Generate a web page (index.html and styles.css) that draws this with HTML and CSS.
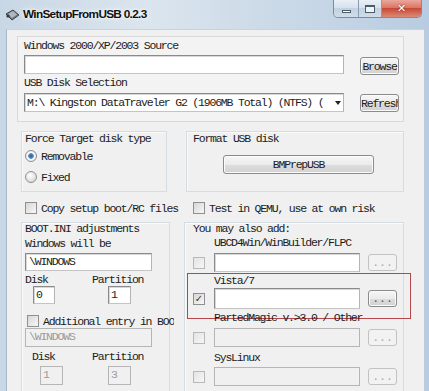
FILE: index.html
```html
<!DOCTYPE html>
<html lang="en">

<head>
    <meta charset="UTF-8">
    <title>WinSetupFromUSB 0.2.3</title>
    <link rel="stylesheet" href="styles.css">
</head>

<body>
<div class="window">
    <div class="titlebar">
        <svg class="app-icon" width="15" height="12" viewBox="0 0 15 12">
            <path d="M1 5 L8 1 L14 6 L7 11 Z" fill="#6f7a85" stroke="#3d444c" stroke-width="1"/>
            <path d="M3 5 L8 2 L12 5.5 L7 9 Z" fill="#aeb8c2"/>
            <circle cx="3" cy="7" r="1.6" fill="#2f353b"/>
        </svg>
        <span class="title">WinSetupFromUSB 0.2.3</span>
        <div class="caption">
            <span class="cap min"><i></i></span>
            <span class="cap max"><i></i></span>
            <span class="cap close">&#x2715;</span>
        </div>
    </div>

    <div class="client">
        <!-- source + usb disk -->
        <div class="panel">
            <div class="lbl">Windows 2000/XP/2003 Source</div>
            <div class="row">
                <div class="textbox src"></div>
                <button class="btn">Browse</button>
            </div>
            <div class="lbl second">USB Disk Selection</div>
            <div class="row combo-row">
                <div class="textbox combo">
                    <span class="combo-text">M:\ Kingston DataTraveler G2 (1906MB Total) (NTFS) (</span>
                    <span class="arrow"></span>
                </div>
                <button class="btn">Refresh</button>
            </div>
        </div>

        <div class="pair">
            <div class="group force">
                <div class="glabel">Force Target disk type</div>
                <div class="opt first"><span class="radio on"></span>Removable</div>
                <div class="opt"><span class="radio"></span>Fixed</div>
            </div>
            <div class="group format">
                <div class="glabel">Format USB disk</div>
                <button class="btn big">BMPrepUSB</button>
            </div>
        </div>

        <div class="checks">
            <div class="opt left"><span class="check"></span>Copy setup boot/RC files</div>
            <div class="opt right"><span class="check"></span>Test in QEMU, use at own risk</div>
        </div>

        <div class="pair bottom">
            <div class="group boot">
                <div class="glabel">BOOT.INI adjustments</div>
                <div class="lbl2">Windows will be</div>
                <div class="textbox path">\WINDOWS</div>
                <div class="dp-labels"><span class="d">Disk</span><span>Partition</span></div>
                <div class="dp-boxes">
                    <div class="textbox num n1">0</div>
                    <div class="textbox num">1</div>
                </div>
                <div class="opt extra"><span class="check"></span><span class="clip">Additional entry in BOO(</span></div>
                <div class="textbox path off">\WINDOWS</div>
                <div class="dp-labels lower"><span class="d">Disk</span><span>Partition</span></div>
                <div class="dp-boxes lower">
                    <div class="textbox num n1 off">1</div>
                    <div class="textbox num off">3</div>
                </div>
            </div>

            <div class="group add">
                <div class="glabel">You may also add:</div>
                <div class="entry">
                    <div class="elabel">UBCD4Win/WinBuilder/FLPC</div>
                    <div class="erow">
                        <span class="check off"></span>
                        <div class="textbox etext"></div>
                        <button class="btn dots off">...</button>
                    </div>
                </div>
                <div class="entry vista">
                    <div class="elabel">Vista/7</div>
                    <div class="erow">
                        <span class="check on">&#x2713;</span>
                        <div class="textbox etext"></div>
                        <button class="btn dots">...</button>
                    </div>
                </div>
                <div class="entry">
                    <div class="elabel">PartedMagic v.&gt;3.0 / Other</div>
                    <div class="erow">
                        <span class="check off"></span>
                        <div class="textbox etext off"></div>
                        <button class="btn dots off">...</button>
                    </div>
                </div>
                <div class="entry">
                    <div class="elabel">SysLinux</div>
                    <div class="erow">
                        <span class="check off"></span>
                        <div class="textbox etext off"></div>
                        <button class="btn dots off">...</button>
                    </div>
                </div>
            </div>
        </div>
    </div>
</div>
</body>

</html>
```

FILE: styles.css
```css
* {
    margin: 0;
    padding: 0;
    box-sizing: border-box;
}

body {
    width: 429px;
    height: 391px;
    overflow: hidden;
    font-family: "Liberation Mono", "DejaVu Sans Mono", monospace;
    font-size: 11.5px;
    letter-spacing: -1.2px;
    color: #1c1c1c;
}

.window {
    width: 429px;
    height: 391px;
    display: flex;
    flex-direction: column;
    padding: 0 5px 0 6px;
    background: linear-gradient(90deg, #c8d7e5, #dbe5ee 35%, #cddbe8 60%, #c0d2e4 85%, #b8cbe0);
}

/* title bar */
.titlebar {
    height: 29px;
    display: flex;
    align-items: flex-start;
    flex-shrink: 0;
}

.app-icon {
    margin: 9px 0 0 -1px;
}

.title {
    margin: 7px 0 0 3px;
    font-family: "Liberation Sans", Arial, sans-serif;
    font-weight: bold;
    font-size: 11.8px;
    letter-spacing: -0.7px;
    color: #111;
    text-shadow: 0 0 6px rgba(255, 255, 255, 0.9), 0 0 3px rgba(255, 255, 255, 0.9);
}

.caption {
    margin: 0 2px 0 auto;
    display: flex;
    height: 18px;
    border: 1px solid #7b8b9c;
    border-top: 0;
    border-radius: 0 0 5px 5px;
    overflow: hidden;
}

.cap {
    height: 17px;
    display: flex;
    align-items: center;
    justify-content: center;
    background: linear-gradient(#e9eff5, #d6e1ec 50%, #c2d2e2 50%, #cfdcea);
    border-right: 1px solid #8c9cad;
}

.min {
    width: 25px;
}

.min i {
    width: 9px;
    height: 3px;
    margin-top: 5px;
    border: 1px solid #4d5a68;
    background: #fff;
}

.max {
    width: 23px;
}

.max i {
    width: 10px;
    height: 8px;
    border: 1px solid #4d5a68;
    border-top-width: 2px;
    background: #eef3f8;
}

.close {
    width: 39px;
    border-right: 0;
    color: #fff;
    font-family: "DejaVu Sans", sans-serif;
    font-size: 11px;
    font-weight: bold;
    letter-spacing: 0;
    text-shadow: 0 0 2px #7a2015;
    background: linear-gradient(#eaa89d, #d9705f 50%, #c84a36 50%, #d98a76);
}

/* window body */
.client {
    flex: 1;
    background: #f0f0f0;
    border-left: 1px solid #a8b7c6;
    border-top: 1px solid #c7d3de;
    padding: 6px 20px 0 10px;
    overflow: hidden;
}

.panel {
    width: 387px;
    height: 86px;
    border: 1px solid #d9d9d9;
    background: #f3f3f3;
    padding: 2px 0 0 6px;
}

.lbl {
    line-height: 13px;
}

.lbl.second {
    margin-top: 1px;
}

.row {
    display: flex;
    align-items: flex-start;
    gap: 16px;
    margin-top: 3px;
}

.combo-row {
    margin-top: 4px;
}

.textbox {
    background: #fff;
    border: 1px solid #8a8a8a;
    border-right-color: #b4b4b4;
    border-bottom-color: #c4c4c4;
    box-shadow: inset 1px 1px 0 #d8d8d8;
    height: 19px;
    line-height: 17px;
    padding-left: 2px;
    white-space: nowrap;
    overflow: hidden;
}

.textbox.src,
.textbox.combo {
    width: 320px;
}

.combo {
    display: flex;
    align-items: center;
}

.combo-text {
    width: 305px;
    overflow: hidden;
    white-space: nowrap;
}

.arrow {
    margin-left: 3px;
    border-left: 3.5px solid transparent;
    border-right: 3.5px solid transparent;
    border-top: 4px solid #222;
}

.btn {
    font-family: inherit;
    font-size: 11.5px;
    letter-spacing: -1.2px;
    color: #1c1c1c;
    height: 18px;
    width: 39px;
    margin-top: 2px;
    border: 1px solid #8b8b8b;
    border-radius: 3px;
    background: linear-gradient(#f6f6f6, #ebebeb 50%, #dddddd 50%, #d2d2d2);
    box-shadow: inset 0 0 0 1px #fbfbfb;
    white-space: nowrap;
    overflow: hidden;
    text-align: center;
}

.combo-row .btn {
    margin-top: 1px;
}

/* group boxes */
.pair {
    display: flex;
    margin-top: 9px;
    margin-left: 4px;
    gap: 19px;
}

.group {
    border: 1px solid #d5dce2;
    box-shadow: inset 1px 1px 0 #fafafa;
    height: 61px;
}

.force {
    width: 146px;
    padding-left: 3px;
}

.format {
    width: 218px;
    padding-left: 6px;
}

.glabel {
    line-height: 13px;
}

.opt {
    display: flex;
    align-items: center;
    gap: 4px;
    height: 16px;
    margin-top: 5px;
    white-space: nowrap;
}

.opt.first {
    margin-top: 3px;
}

.radio {
    width: 12px;
    height: 12px;
    border-radius: 50%;
    border: 1px solid #8f8f8f;
    background: radial-gradient(circle at 40% 35%, #ffffff, #dcdcdc 70%);
}

.radio.on {
    background: radial-gradient(circle, #2a5a96 0, #5d8fc8 2.5px, #ffffff 3.2px, #dcdcdc 6px);
}

.btn.big {
    width: 151px;
    height: 19px;
    margin: 10px 0 0 30px;
}

.checks {
    display: flex;
    margin-top: 9px;
    height: 14px;
}

.checks .opt {
    margin-top: 0;
    height: 14px;
}

.checks .left {
    width: 169px;
    padding-left: 8px;
}

.checks .right {
    padding-left: 7px;
}

.check {
    width: 12px;
    height: 12px;
    flex-shrink: 0;
    border: 1px solid #8f8f8f;
    background: linear-gradient(135deg, #d6d6d6, #f8f8f8);
    display: flex;
    align-items: center;
    justify-content: center;
    font-family: "DejaVu Sans", sans-serif;
    font-size: 10px;
    letter-spacing: 0;
    color: #3a3a3a;
}

.check.off {
    border-color: #b8b8b8;
    background: linear-gradient(135deg, #e4e4e4, #f6f6f6);
}

.check.on {
    font-weight: bold;
}

/* bottom groups */
.pair.bottom {
    margin-top: 7px;
    gap: 14px;
}

.boot,
.add {
    height: 180px;
}

.boot {
    width: 149px;
    padding-left: 3px;
}

.boot .glabel,
.add .glabel {
    line-height: 12px;
}

.lbl2 {
    line-height: 13px;
    margin-top: 2px;
}

.textbox.path {
    width: 127px;
    height: 18px;
    line-height: 16px;
    margin-top: 3px;
    padding-left: 3px;
}

.textbox.off {
    background: #f0f0f0;
    color: #9a9a9a;
    border-color: #b5b5b5;
    box-shadow: none;
}

.dp-labels {
    display: flex;
    line-height: 12px;
    margin-top: 3px;
}

.dp-labels .d {
    width: 67px;
}

.dp-boxes {
    display: flex;
}

.textbox.num {
    width: 23px;
    height: 18px;
    line-height: 16px;
    margin-left: 53px;
}

.textbox.num.n1 {
    width: 22px;
    margin-left: 8px;
}

.opt.extra {
    margin-top: 10px;
    height: 14px;
    padding-left: 2px;
}

.clip {
    width: 131px;
    flex-shrink: 0;
    overflow: hidden;
}

.boot .textbox.path.off {
    height: 19px;
    margin-top: 0;
}

.dp-labels.lower {
    margin-top: 4px;
    padding-left: 7px;
}

.dp-labels.lower .d {
    width: 60px;
}

.dp-boxes.lower {
    margin-top: 3px;
}

.dp-boxes.lower .textbox.num {
    height: 19px;
    margin-left: 45px;
}

.dp-boxes.lower .textbox.num.n1 {
    width: 23px;
    margin-left: 15px;
}

.add {
    width: 220px;
    padding-left: 8px;
}

.entry {
    position: relative;
    margin-top: 2px;
}

.elabel {
    line-height: 12px;
    padding-left: 21px;
}

.erow {
    display: flex;
    align-items: center;
    margin-top: 4px;
}

.erow .check {
    margin-right: 9px;
}

.textbox.etext {
    width: 146px;
}

.btn.dots {
    width: 29px;
    height: 17px;
    margin: 0 0 0 8px;
    color: #555;
    letter-spacing: 0;
}

.btn.dots.off {
    border-color: #c2c2c2;
    background: #f2f2f2;
    box-shadow: none;
    color: #a8a8a8;
}

.entry.vista {
    margin-top: 3px;
}

.entry.vista .textbox.etext {
    height: 21px;
}

.entry.vista .erow {
    margin-top: 1px;
}

/* red marker around the Vista/7 row */
.entry.vista::after {
    content: "";
    position: absolute;
    left: -6px;
    right: -8px;
    top: -2px;
    bottom: -10px;
    border: 1.5px solid #b4474a;
    pointer-events: none;
}

.entry.vista + .entry {
    margin-top: 3px;
}

.entry:last-child {
    margin-top: 5px;
}

.entry:last-child .erow {
    margin-top: 3px;
}
```
